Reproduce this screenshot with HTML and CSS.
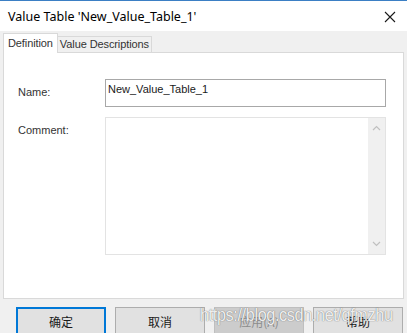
FILE: index.html
```html
<!DOCTYPE html>
<html lang="en">
<head>
    <meta charset="UTF-8">
    <title>Value Table</title>
    <link rel="stylesheet" href="styles.css">
</head>
<body>
    <div class="window">
        <div class="titlebar">
            <span class="title">Value Table 'New_Value_Table_1'</span>
            <span class="close">
                <svg width="12" height="12" viewBox="0 0 12 12"><path d="M1 1 L11 11 M11 1 L1 11" stroke="#1a1a1a" stroke-width="1.1" fill="none"/></svg>
            </span>
        </div>

        <div class="client">
            <div class="tabs">
                <div class="tab active">Definition</div>
                <div class="tab">Value Descriptions</div>
            </div>

            <div class="panel">
                <div class="form">
                    <label class="lbl name-lbl">Name:</label>
                    <div class="field name-field">New_Value_Table_1</div>

                    <label class="lbl">Comment:</label>
                    <div class="field comment-field">
                        <div class="comment-text"></div>
                        <div class="scrollbar">
                            <svg width="9" height="6" viewBox="0 0 9 6"><path d="M1 5 L4.5 1.5 L8 5" stroke="#c0c0c0" stroke-width="1.2" fill="none"/></svg>
                            <svg width="9" height="6" viewBox="0 0 9 6"><path d="M1 1 L4.5 4.5 L8 1" stroke="#c0c0c0" stroke-width="1.2" fill="none"/></svg>
                        </div>
                    </div>
                </div>
            </div>

            <div class="buttons">
                <button class="btn default">确定</button>
                <button class="btn">取消</button>
                <button class="btn disabled">应用(A)</button>
                <button class="btn">帮助</button>
            </div>
        </div>

        <div class="watermark">https://blog.csdn.net/qfmzhu</div>
    </div>
</body>
</html>
```

FILE: styles.css
```css
* {
    box-sizing: border-box;
    margin: 0;
    padding: 0;
}

body {
    background: #f0f0f0;
    font-family: 'Liberation Sans', Arial, 'Noto Sans CJK SC', sans-serif;
    font-size: 11px;
    color: #1a1a1a;
}

.window {
    position: relative;
    width: 407px;
    height: 333px;
    overflow: hidden;
    border-top: 1px solid #3b7fc4;
    background: #f0f0f0;
}

.titlebar {
    height: 30px;
    background: #fff;
    display: flex;
    align-items: center;
    justify-content: space-between;
    padding: 0 11px 0 8px;
}

.title {
    font-family: 'Noto Sans', 'Open Sans', sans-serif;
    font-size: 12.5px;
    color: #000;
}

.close {
    display: flex;
    padding-top: 1px;
}

.client {
    padding: 2px 3px 0 3px;
}

.tabs {
    display: flex;
    align-items: flex-end;
    height: 19px;
    position: relative;
    z-index: 1;
}

.tab {
    height: 16px;
    padding: 0 2px;
    border: 1px solid #d9d9d9;
    border-bottom: none;
    background: #f0f0f0;
    color: #333;
    line-height: 14px;
    margin-left: -1px;
    letter-spacing: -0.1px;
}

.tab.active {
    background: #fff;
    padding: 2px 4px 0 4px;
    margin-left: 0;
    margin-bottom: -1px;
    height: 20px;
    z-index: 2;
}

.panel {
    width: 401px;
    height: 247px;
    background: #fff;
    border: 1px solid #d9d9d9;
    padding: 26px 0 0 14px;
}

.form {
    display: grid;
    grid-template-columns: 87px 281px;
    row-gap: 10px;
    align-items: start;
}

.lbl {
    color: #333;
    padding-top: 7px;
}

.field {
    border: 1px solid #a8a8a8;
    background: #fff;
}

.name-field {
    height: 28px;
    padding: 3px 2px;
    color: #1a1a1a;
}

.comment-field {
    height: 138px;
    display: flex;
    border-color: #e3e3e3;
}

.comment-text {
    flex: 1;
}

.scrollbar {
    width: 17px;
    background: #f0f0f0;
    display: flex;
    flex-direction: column;
    justify-content: space-between;
    align-items: center;
    padding: 7px 0 7px;
}

.buttons {
    display: flex;
    gap: 9px;
    padding: 8px 0 0 13px;
}

.btn {
    width: 90px;
    height: 28px;
    border: 1px solid #adadad;
    background: #e1e1e1;
    font-family: 'Noto Sans CJK SC', sans-serif;
    font-size: 12px;
    color: #1a1a1a;
}

.btn.default {
    border: 2px solid #0078d7;
}

.btn.disabled {
    background: #cccccc;
    border-color: #bfbfbf;
    color: #8c8c8c;
}

.watermark {
    position: absolute;
    left: 200px;
    top: 304px;
    font-family: 'Liberation Sans', Arial, sans-serif;
    font-size: 18px;
    color: rgba(255, 255, 255, 0.9);
    text-shadow: 0 0 1px rgba(90, 90, 90, 0.7), 0 0 1px rgba(90, 90, 90, 0.5);
    letter-spacing: -0.4px;
    white-space: nowrap;
    transform: scaleX(0.9);
    transform-origin: left top;
}
```
